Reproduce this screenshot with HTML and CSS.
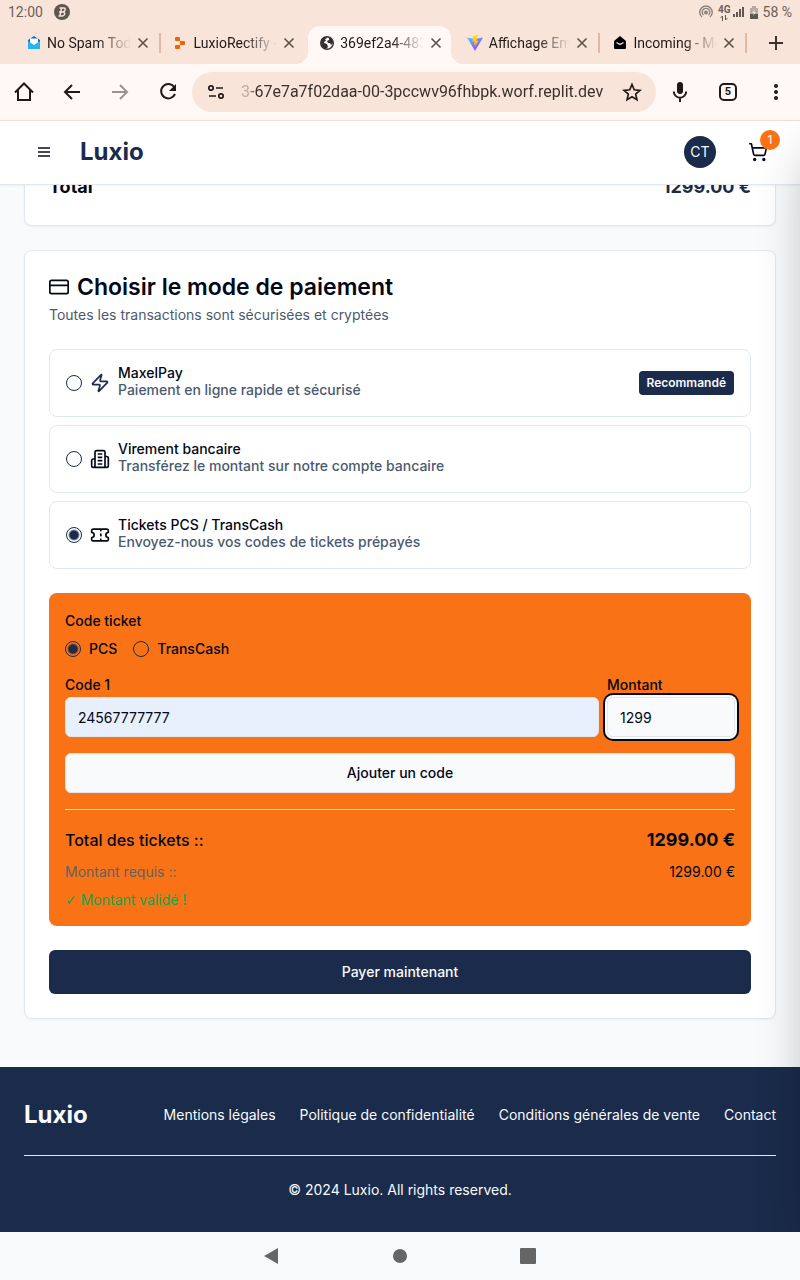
FILE: index.html
```html
<!DOCTYPE html>
<html lang="fr">
<head>
<meta charset="utf-8">
<meta name="viewport" content="width=device-width, initial-scale=1">
<title>Luxio – Paiement</title>
<link rel="stylesheet" href="styles.css">
</head>
<body>
<div class="screen">
  <div class="status">
    <span>12:00</span>
    <svg class="status-app" viewBox="0 0 16 16" width="16" height="16"><circle cx="8" cy="8" r="8" fill="#5f5650"/><path d="M5.500 4h4.500q1.500 0 1.200 1.700T9 8q2 .3 1.600 2.200T8 12H4.500M7.500 4.500 6 11.500M5 8h4" fill="none" stroke="#f9e4da" stroke-width="1.500"/></svg>
    <span class="status-right">
      <svg viewBox="0 0 14 14" width="14" height="14" fill="none" stroke="#8f837c" stroke-width="1.400"><path d="M3 12a6.200 6.200 0 1 1 8 0M4.500 10a3.800 3.800 0 1 1 5 0"/><circle cx="7" cy="7.500" r="1.300" fill="#8f837c"/></svg>
      <span class="network"><b>4G</b><svg viewBox="0 0 8 6" width="8" height="6" fill="none" stroke="#5f5650"><path d="M2.500 6V1L.5 3M5.500 0v5l2-2"/></svg></span>
      <svg viewBox="0 0 12 12" width="12" height="12" fill="#5f5650"><path d="M0 8h2v3H0zM3 6h2v5H3zM6 3h2v8H6zM9 1h2v10H9z"/></svg>
      <svg class="battery" viewBox="0 0 8 13" width="8" height="13"><path d="M2 0h4v2h2v11H0V2h2z" fill="#b8aaa2"/><path d="M0 8h8v5H0z" fill="#5f5650"/><path d="m5 3-3 4h2l-1 3 3-4H4z" fill="#f9e4da"/></svg>
      <span>58 %</span>
    </span>
  </div>

  <div class="tabs">
    <div class="tab">
      <svg viewBox="0 0 14 14" width="14" height="14"><path d="M1 4 7 0l6 4v8q0 1-1 1H2q-1 0-1-1z" fill="#1769c5"/><path d="M3 2.500h8V7l-4 3-4-3z" fill="#fff"/><path d="m1 5 6 4 6-4v8H1z" fill="#27b3f2"/></svg>
      <span class="tab-title">No Spam Tod</span>
      <button class="close" aria-label="Fermer l’onglet"><svg viewBox="0 0 12 12" width="12" height="12"><path d="m1.500 1.500 9 9m0-9-9 9"/></svg></button>
    </div>
    <div class="tab lined">
      <svg viewBox="0 0 14 14" width="14" height="14" fill="#f26207"><path d="M2 1h3q1 0 1 1v3H2q-1 0-1-1V2q0-1 1-1zM6 5h4q1 0 1 1v2q0 1-1 1H6zM1 10q0-1 1-1h4v3q0 1-1 1H2q-1 0-1-1z"/></svg>
      <span class="tab-title">LuxioRectify -</span>
      <button class="close" aria-label="Fermer l’onglet"><svg viewBox="0 0 12 12" width="12" height="12"><path d="m1.500 1.500 9 9m0-9-9 9"/></svg></button>
    </div>
    <div class="tab active">
      <svg viewBox="0 0 14 14" width="14" height="14"><circle cx="7" cy="7" r="6.300" fill="#fff8f5" stroke="#303030" stroke-width="1.400"/><path d="M1 5q1-4 6-4 0 2-2 2l1 2q-2 0-2 2l3 1 1 3-2 2Q1 12 1 5zm8-4q4 2 4 6l-2 2-1-2H8l-1-2 2-1z" fill="#303030"/></svg>
      <span class="tab-title">369ef2a4-483</span>
      <button class="close" aria-label="Fermer l’onglet"><svg viewBox="0 0 12 12" width="12" height="12"><path d="m1.500 1.500 9 9m0-9-9 9"/></svg></button>
    </div>
    <div class="tab">
      <svg viewBox="0 0 16 16" width="16" height="16"><defs><linearGradient id="v" x1="0" y1="0" x2="1" y2="1"><stop stop-color="#41d1ff"/><stop offset="1" stop-color="#a427fb"/></linearGradient><linearGradient id="y" x1="0" y1="0" x2="0" y2="1"><stop stop-color="#ffdd35"/><stop offset="1" stop-color="#ffa800"/></linearGradient></defs><path d="M0 2.500 8 4l8-1.500L8 16z" fill="url(#v)"/><path d="m11 0-5 1-.5 6 2-.5L7 10l1.500-.5L8 12l3.500-6.500-2 .3z" fill="url(#y)"/></svg>
      <span class="tab-title">Affichage Em</span>
      <button class="close" aria-label="Fermer l’onglet"><svg viewBox="0 0 12 12" width="12" height="12"><path d="m1.500 1.500 9 9m0-9-9 9"/></svg></button>
    </div>
    <div class="tab lined last">
      <svg viewBox="0 0 14 14" width="14" height="14"><path d="m1 5 6-5 6 5v7q0 1-1 1H2q-1 0-1-1z"/><path d="m3.500 6.500 3.500 2 3.500-2" fill="none" stroke="#f9e4da" stroke-width="1.400"/></svg>
      <span class="tab-title">Incoming - Me</span>
      <button class="close" aria-label="Fermer l’onglet"><svg viewBox="0 0 12 12" width="12" height="12"><path d="m1.500 1.500 9 9m0-9-9 9"/></svg></button>
    </div>
    <button class="new-tab" aria-label="Nouvel onglet"><svg viewBox="0 0 14 14" width="14" height="14" fill="none" stroke="#3c332d" stroke-width="2"><path d="M7 0v14M0 7h14"/></svg></button>
  </div>

  <div class="toolbar">
    <button aria-label="Accueil"><svg viewBox="0 0 24 24" width="24" height="24"><path d="M6 10v10h12V10M3 12.500l9-9 9 9M6 20h12"/></svg></button>
    <button aria-label="Retour"><svg viewBox="0 0 24 24" width="24" height="24"><path d="M20 12H5m7-7-7 7 7 7"/></svg></button>
    <button class="dim" aria-label="Suivant"><svg viewBox="0 0 24 24" width="24" height="24"><path d="M4 12h15m-7-7 7 7-7 7"/></svg></button>
    <button aria-label="Actualiser"><svg viewBox="0 0 24 24" width="24" height="24"><path d="M18.500 7.500A7.200 7.200 0 1 0 19 14"/><path d="M20 4v7h-7z" fill="#201a17" stroke="none"/></svg></button>
    <div class="omnibox">
      <svg viewBox="0 0 18 16" width="18" height="16" fill="none" stroke="#201a17" stroke-width="1.700"><circle cx="4" cy="4" r="2.200"/><path d="M9 4h7M2 12h7"/><circle cx="14" cy="12" r="2.200"/></svg>
      <input type="text" aria-label="Adresse" value="3-67e7a7f02daa-00-3pccwv96fhbpk.worf.replit.dev">
      <button aria-label="Ajouter aux favoris"><svg viewBox="0 0 24 24" width="20" height="20"><path d="m12 3 2.700 6.400 6.900.6-5.200 4.500 1.600 6.800-6-3.600-6 3.600 1.600-6.800L2.400 10l6.900-.6z"/></svg></button>
    </div>
    <button aria-label="Recherche vocale"><svg viewBox="0 0 24 24" width="24" height="24"><path d="M12 5v6" stroke-width="6" stroke-linecap="round"/><path d="M5.800 11.500a6.200 6.200 0 0 0 12.400 0M12 18v4"/></svg></button>
    <button class="count" aria-label="Onglets ouverts"><span>5</span></button>
    <button aria-label="Menu du navigateur"><svg viewBox="0 0 24 24" width="24" height="24"><g fill="#201a17" stroke="none"><circle cx="12" cy="6" r="2"/><circle cx="12" cy="12" r="2"/><circle cx="12" cy="18" r="2"/></g></svg></button>
  </div>

  <div class="page">
    <header class="site-header">
      <button class="menu" aria-label="Menu"><svg viewBox="0 0 16 16" width="16" height="16" fill="none" stroke="#4a4658" stroke-width="2"><path d="M2 4h12M2 8h12M2 12h12"/></svg></button>
      <a class="brand" href="#">Luxio</a>
      <button class="avatar">CT</button>
      <button class="cart" aria-label="Panier"><svg viewBox="0 0 24 24" width="20" height="20" fill="none" stroke="#020817" stroke-width="2" stroke-linecap="round" stroke-linejoin="round"><circle cx="8" cy="21" r="1"/><circle cx="19" cy="21" r="1"/><path d="M2.050 2.050h2l2.660 12.420a2 2 0 0 0 2 1.580h9.780a2 2 0 0 0 1.950-1.570l1.650-7.430H5.120"/></svg><span class="badge">1</span></button>
    </header>

    <main>
      <section class="card summary">
        <div class="row total"><span>Total</span><span class="navy">1299.00 €</span></div>
      </section>

      <section class="card">
        <h2><svg viewBox="0 0 24 24" width="20" height="20" class="line"><rect width="22" height="16" x="1" y="4" rx="2"/><path d="M1 10h22"/></svg>Choisir le mode de paiement</h2>
        <p class="muted intro">Toutes les transactions sont sécurisées et cryptées</p>

        <form>
          <div class="options">
            <label class="option">
              <input type="radio" name="method">
              <svg viewBox="0 0 24 24" width="20" height="20" class="line blue"><path d="M4 14a1 1 0 0 1-.78-1.630l9.900-10.200a.5.5 0 0 1 .86.460l-1.920 6.020A1 1 0 0 0 13 10h7a1 1 0 0 1 .78 1.630l-9.900 10.200a.5.5 0 0 1-.86-.46l1.920-6.020A1 1 0 0 0 11 14z"/></svg>
              <span class="option-text"><span>MaxelPay</span><small>Paiement en ligne rapide et sécurisé</small></span>
              <span class="tag">Recommandé</span>
            </label>
            <label class="option">
              <input type="radio" name="method">
              <svg viewBox="0 0 24 24" width="20" height="20" class="line"><path d="M6 22V4a2 2 0 0 1 2-2h8a2 2 0 0 1 2 2v18ZM6 12H4a2 2 0 0 0-2 2v6a2 2 0 0 0 2 2h2M18 9h2a2 2 0 0 1 2 2v9a2 2 0 0 1-2 2h-2M10 6h4M10 10h4M10 14h4M10 18h4"/></svg>
              <span class="option-text"><span>Virement bancaire</span><small>Transférez le montant sur notre compte bancaire</small></span>
            </label>
            <label class="option">
              <input type="radio" name="method" checked>
              <svg viewBox="0 0 24 24" width="20" height="20" class="line"><path d="M2 9a3 3 0 0 1 0 6v2a2 2 0 0 0 2 2h16a2 2 0 0 0 2-2v-2a3 3 0 0 1 0-6V7a2 2 0 0 0-2-2H4a2 2 0 0 0-2 2ZM13 5v2M13 17v2M13 11v2"/></svg>
              <span class="option-text"><span>Tickets PCS / TransCash</span><small>Envoyez-nous vos codes de tickets prépayés</small></span>
            </label>
          </div>

          <div class="ticket">
            <fieldset>
              <legend>Code ticket</legend>
              <div class="kinds">
                <label><input type="radio" name="kind" checked>PCS</label>
                <label><input type="radio" name="kind">TransCash</label>
              </div>
            </fieldset>
            <div class="fields">
              <div class="field grow"><label for="code">Code 1</label><input id="code" class="filled" type="text" value="24567777777"></div>
              <div class="field amount"><label for="amount">Montant</label><input id="amount" class="focused" type="text" inputmode="decimal" value="1299"></div>
            </div>
            <button class="add" type="button">Ajouter un code</button>
            <div class="sums">
              <div class="row"><span>Total des tickets ::</span><strong>1299.00 €</strong></div>
              <div class="row small"><span class="required">Montant requis ::</span><span>1299.00 €</span></div>
              <p class="valid"><span class="check">✓</span> Montant validé !</p>
            </div>
          </div>

          <button class="pay" type="button">Payer maintenant</button>
        </form>
      </section>
    </main>

    <footer>
      <div class="footer-top">
        <a class="brand" href="#">Luxio</a>
        <nav>
          <a href="#">Mentions légales</a>
          <a href="#">Politique de confidentialité</a>
          <a href="#">Conditions générales de vente</a>
          <a href="#">Contact</a>
        </nav>
      </div>
      <p>© 2024 Luxio. All rights reserved.</p>
    </footer>
    <aside class="drawer" aria-hidden="true"></aside>
  </div>

  <div class="system">
    <button aria-label="Retour système"><svg viewBox="0 0 16 18" width="16" height="18"><path d="M14 1v16L0 9z"/></svg></button>
    <button aria-label="Écran d’accueil"><svg viewBox="0 0 16 16" width="16" height="16"><circle cx="8" cy="8" r="7"/></svg></button>
    <button aria-label="Applications récentes"><svg viewBox="0 0 16 16" width="16" height="16"><rect width="16" height="16" rx="1"/></svg></button>
  </div>
</div>
</body>
</html>
```
FILE: styles.css
```css
* { box-sizing: border-box; margin: 0; }
body { font: 14px/20px Inter, sans-serif; color: #020817; background: #f8fafc; }
button { font: inherit; color: inherit; background: none; border: 0; padding: 0; cursor: pointer; }
a { color: inherit; text-decoration: none; }
input { font: inherit; color: inherit; }
svg { display: block; flex: none; }
.screen { min-height: 100vh; display: flex; flex-direction: column; overflow: hidden; }

/* Browser chrome */
.status, .tabs { font-family: Roboto, sans-serif; background: #f9e4da; display: flex; align-items: center; }
.status { height: 24px; padding: 0 8px; gap: 11px; color: #6b605a; }
.status-right { margin-left: auto; display: flex; align-items: center; gap: 5px; }
.network { display: flex; flex-direction: column; align-items: center; margin-right: -3px; }
.network b { font-size: 10px; line-height: 11px; }
.tabs { height: 40px; padding: 2px 17px 0 19px; color: #201a17; }
.tab { position: relative; z-index: 0; flex: 1; min-width: 0; height: 100%; display: flex; align-items: center; gap: 6px; padding: 0 17px 4px 8px; }
.tab.active { z-index: 1; }
.tab.active::before { content: ""; position: absolute; z-index: -1; inset: 0 8px 0 -4px; border-radius: 12px 12px 0 0; background: #fff8f5; }
.tab.active::after {
  content: ""; position: absolute; z-index: -2; bottom: 0; left: -16px; right: -4px; height: 12px;
  background:
    radial-gradient(circle at 0 0, #f9e4da 12px, #fff8f5 12px) left / 12px 12px no-repeat,
    radial-gradient(circle at 100% 0, #f9e4da 12px, #fff8f5 12px) right / 12px 12px no-repeat;
}
.tab.lined::before, .tab.last::after { content: ""; position: absolute; top: 7px; width: 2px; height: 20px; background: #dfb9a3; }
.tab.lined::before { left: -7px; }
.tab.last::after { right: 5px; }
.tab-title { flex: 1; min-width: 0; overflow: hidden; white-space: nowrap; mask-image: linear-gradient(90deg, #000 60%, transparent); }
.close svg { stroke: #5b504a; stroke-width: 1.600; fill: none; }
.new-tab { margin: 0 0 4px 17px; }
.toolbar { height: 57px; display: flex; align-items: center; gap: 24px; padding: 0 12px; background: #fff8f5; border-bottom: 1px solid #f5dbd0; }
.toolbar > button svg, .omnibox button svg { fill: none; stroke: #201a17; stroke-width: 2; }
.toolbar .dim { opacity: .45; }
.omnibox { flex: 1; min-width: 0; height: 40px; margin: 0 -12px; border-radius: 20px; background: #f9e4da; display: flex; align-items: center; gap: 16px; padding: 0 14px 0 15px; }
.omnibox input { flex: 1; min-width: 0; border: 0; padding: 0; background: none; font: 16px/24px Roboto, sans-serif; color: #3a312c; mask-image: linear-gradient(90deg, rgba(0, 0, 0, .3) 8px, #000 14px); }
.count { width: 24px; display: flex; justify-content: center; }
.count span { width: 18px; height: 18px; border: 2px solid #201a17; border-radius: 5px; font: 700 11px/14px Roboto, sans-serif; color: #201a17; }

/* Site header */
.page { position: relative; flex: 1; display: flex; flex-direction: column; overflow: hidden; }
.site-header { position: relative; z-index: 1; height: 64px; display: flex; align-items: center; padding: 0 32px 2px 36px; background: #fff; border-bottom: 1px solid #e2e8f0; box-shadow: 0 1px 2px rgba(0, 0, 0, .05); }
.brand { font-size: 24px; line-height: 32px; font-weight: 700; }
.site-header .brand { margin-left: 28px; color: #1a2b4b; }
.avatar { width: 32px; height: 32px; margin-left: auto; border-radius: 50%; background: #1a2b4b; color: #f8fafc; }
.cart { position: relative; margin-left: 32px; }
.badge { position: absolute; top: -12px; right: -12px; width: 20px; height: 20px; border-radius: 50%; background: #f97316; color: #fff; font-size: 12px; line-height: 20px; }

/* Checkout */
main { flex: 1; display: flex; flex-direction: column; gap: 24px; padding: 0 24px 48px; }
.card { padding: 24px; background: #fff; border: 1px solid #e2e8f0; border-radius: 8px; box-shadow: 0 1px 2px rgba(0, 0, 0, .05); }
.summary { margin-top: -37px; }
.row { display: flex; align-items: center; justify-content: space-between; font-size: 16px; line-height: 28px; font-weight: 500; }
.row strong, .row.total { font-size: 18px; font-weight: 700; }
.row.small { font-size: 14px; line-height: 20px; font-weight: 400; }
.navy { color: #1a2b4b; }
.muted { color: #4b5a70; }
h2 { display: flex; align-items: center; gap: 8px; font-size: 23px; line-height: 24px; font-weight: 600; }
.intro { margin: 6px 0 24px; }
.line { fill: none; stroke: #020817; stroke-width: 2; stroke-linecap: round; stroke-linejoin: round; }
.blue { stroke: #1a2b4b; }
.options { display: grid; gap: 8px; }
.option { display: flex; align-items: center; gap: 8px; padding: 16px; border: 1px solid #e2e8f0; border-radius: 8px; font-weight: 500; }
.option-text { display: grid; line-height: 14px; }
.option small { font-size: 14px; line-height: 20px; color: #4b5a70; }
.tag { margin-left: auto; padding: 4px 8px; border-radius: 4px; background: #1a2b4b; color: #f8fafc; font-size: 12px; line-height: 16px; font-weight: 600; }
input[type="radio"] { appearance: none; flex: none; width: 16px; height: 16px; margin: 0; border: 1px solid #1a2b4b; border-radius: 50%; }
input[type="radio"]:checked { background: radial-gradient(circle, #1a2b4b 4px, transparent 6px); }

.ticket { display: grid; gap: 16px; margin: 24px 0; padding: 16px; border-radius: 8px; background: #f97316; }
fieldset { min-width: 0; padding: 0; border: 0; }
legend { padding: 0; line-height: 24px; font-weight: 500; }
.kinds { display: flex; gap: 16px; height: 16px; margin-top: 8px; }
.kinds label { display: flex; align-items: center; gap: 8px; line-height: 16px; font-weight: 500; }
.fields { display: flex; gap: 8px; }
.field { display: grid; }
.field label { line-height: 24px; font-weight: 500; }
.grow { flex: 1; min-width: 0; }
.amount { width: 128px; }
.field input { width: 100%; height: 40px; padding: 0 12px; border: 1px solid #e2e8f0; border-radius: 6px; background: #f8fafc; }
.field .filled { background: #e8f0fe; }
.field .focused { box-shadow: 0 0 0 2px #f8fafc, 0 0 0 4px #020817; outline: 0; }
.add { height: 40px; border: 1px solid #e2e8f0; border-radius: 6px; background: #f8fafc; font-weight: 500; }
.sums { display: grid; gap: 8px; padding-top: 16px; border-top: 1px solid #e2e8f0; }
.required { color: #64615f; }
.valid { color: #16a34a; }
.check { font-family: "DejaVu Sans", sans-serif; line-height: 16px; }
.pay { display: block; width: 100%; height: 44px; border-radius: 6px; background: #1a2b4b; color: #f8fafc; font-weight: 500; }

footer { padding: 32px 24px; background: #1a2b4b; color: #f8fafc; }
.footer-top { display: flex; align-items: center; justify-content: space-between; padding-bottom: 24px; border-bottom: 1px solid #e2e8f0; }
nav { display: flex; gap: 24px; }
footer p { margin-top: 24px; text-align: center; }

/* Closed side panel: only its shadow reaches into the page */
.drawer { position: absolute; z-index: 2; top: 0; bottom: 0; left: 100%; width: 400px; box-shadow: 0 25px 50px -12px rgba(0, 0, 0, .32); pointer-events: none; }

.system { height: 48px; display: flex; align-items: center; justify-content: center; gap: 112px; fill: #666; }
```
